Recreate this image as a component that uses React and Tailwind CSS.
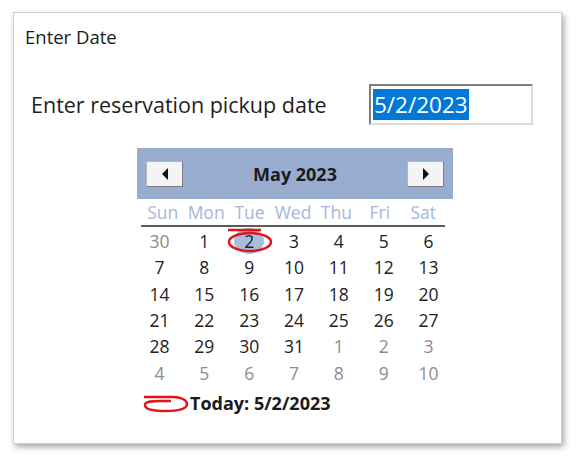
import React from "react";

const DAY_NAMES = ["Sun", "Mon", "Tue", "Wed", "Thu", "Fri", "Sat"];

// six weeks shown, out-of-month days greyed
const WEEKS = [
  [[30, 0], [1, 1], [2, 1], [3, 1], [4, 1], [5, 1], [6, 1]],
  [[7, 1], [8, 1], [9, 1], [10, 1], [11, 1], [12, 1], [13, 1]],
  [[14, 1], [15, 1], [16, 1], [17, 1], [18, 1], [19, 1], [20, 1]],
  [[21, 1], [22, 1], [23, 1], [24, 1], [25, 1], [26, 1], [27, 1]],
  [[28, 1], [29, 1], [30, 1], [31, 1], [1, 0], [2, 0], [3, 0]],
  [[4, 0], [5, 0], [6, 0], [7, 0], [8, 0], [9, 0], [10, 0]],
];

function NavButton({ dir }) {
  return (
    <button className="flex h-[26px] w-[37px] items-center justify-center border border-[#b8b8b8] border-r-[#7c7c7c] border-b-[#7c7c7c] bg-[#f4f4f4]">
      <svg width="8" height="12" viewBox="0 0 8 12">
        {dir === "left" ? (
          <polygon points="7,0 7,12 1,6" fill="#111" />
        ) : (
          <polygon points="1,0 1,12 7,6" fill="#111" />
        )}
      </svg>
    </button>
  );
}

export default function App() {
  return (
    <div className="h-[457px] w-[576px] bg-white pl-[13px] pt-[12px] font-['Open_Sans','Noto_Sans',sans-serif]">
      <div className="relative h-[432px] w-[549px] border border-[#cfcfcf] bg-white shadow-[2px_3px_6px_rgba(0,0,0,0.35)]">
        <div className="pl-[11px] pt-[13px] text-[18.5px] leading-[22px] text-[#1a1a1a]">Enter Date</div>

        {/* --- label + text box --- */}
        <div className="mt-[36px] flex items-center">
          <div className="w-[355px] pl-[17px] text-[21.5px] leading-[28px] text-[#1e1e1e]">
            Enter reservation pickup date
          </div>
          <div className="flex h-[41px] w-[164px] items-center border-2 border-[#7d7d7d] border-r-[#dcdcdc] border-b-[#dcdcdc] pl-[2px]">
            <span className="bg-[#0078d7] px-[1px] text-[22.5px] leading-[31px] text-white">5/2/2023</span>
          </div>
        </div>

        {/* --- month calendar --- */}
        <div className="relative ml-[123px] mt-[23px] w-[316px]">
          <div className="flex h-[51px] items-center justify-between bg-[#98acd0] px-[9px] pt-[1px]">
            <NavButton dir="left" />
            <span className="text-[18px] font-bold text-[#1b1b1b]">May 2023</span>
            <NavButton dir="right" />
          </div>

          <div className="mx-[4px] mr-[8px] grid grid-cols-7 border-b-2 border-[#5a5a5a] pt-[1px] text-[17.5px] leading-[25px] text-[#a3b8da]">
            {DAY_NAMES.map((d) => (
              <div key={d} className="-mx-[2px] text-center">{d}</div>
            ))}
          </div>

          <div className="mt-[1px] pr-[2px]">
            {WEEKS.map((week, i) => (
              <div key={i} className="grid h-[26.3px] grid-cols-7 items-center text-[17.5px]">
                {week.map(([n, cur], j) => (
                  <div key={j} className="flex justify-center">
                    <span
                      className={
                        (cur ? "text-[#222]" : "text-[#8d8d8d]") +
                        (i === 0 && j === 2 ? " rounded-[50%] bg-[#a9bedd] px-[10px]" : "")
                      }
                    >
                      {n}
                    </span>
                  </div>
                ))}
              </div>
            ))}
          </div>

          <div className="mt-[8px] flex h-[20px] items-center">
            <svg width="46" height="20" viewBox="0 0 46 20" className="ml-[6px]">
              <path
                d="M1 3 L30 3 C38 3 44 6 44 10 C44 15 36 17 22 17 C10 17 2 15 2 11 C2 7 10 7 18 7 L28 7"
                fill="none"
                stroke="#e0141a"
                strokeWidth="2.5"
              />
            </svg>
            <span className="ml-[1px] text-[18px] font-bold text-[#1b1b1b]">Today: 5/2/2023</span>
          </div>

          {/* red pen circle around the selected date */}
          <svg
            width="52"
            height="28"
            viewBox="0 0 52 28"
            className="pointer-events-none absolute left-[88px] top-[79px]"
          >
            <path d="M3 3 L36 3" stroke="#e0141a" strokeWidth="2.5" fill="none" />
            <ellipse cx="25" cy="15" rx="21" ry="9" stroke="#e0141a" strokeWidth="2.5" fill="none" />
          </svg>
        </div>
      </div>
    </div>
  );
}
